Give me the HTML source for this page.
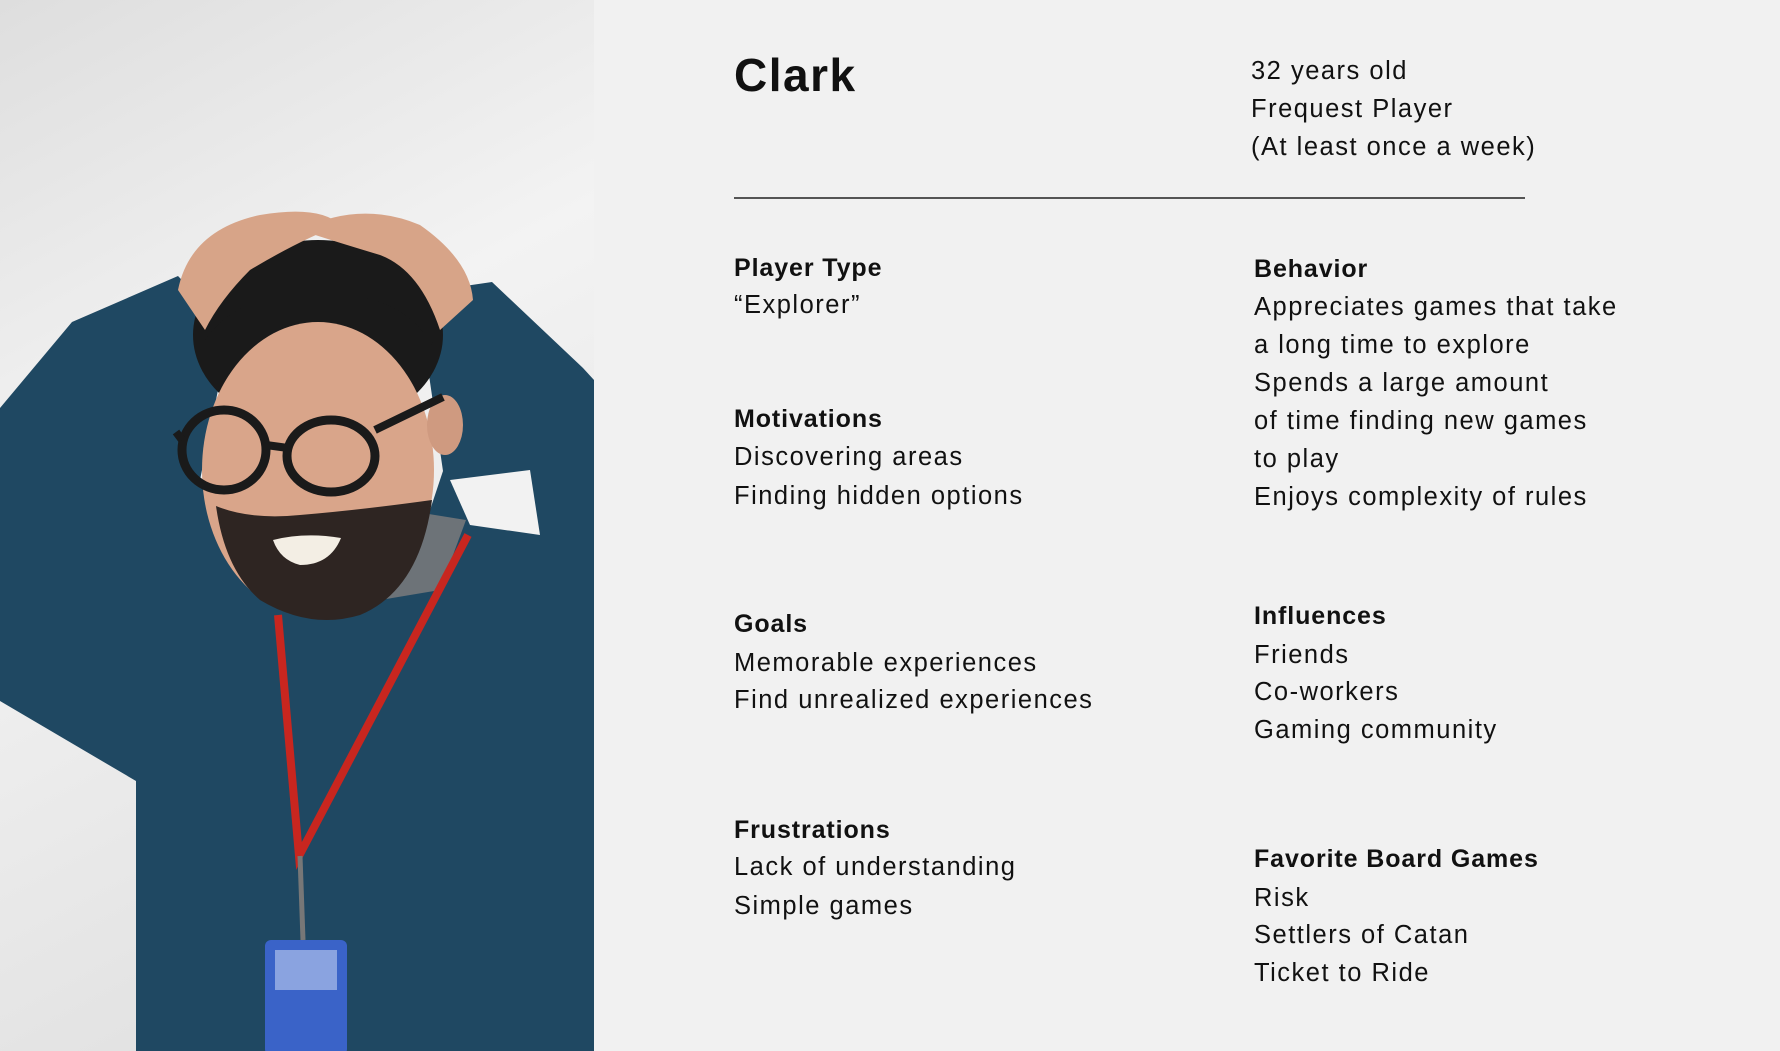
<!DOCTYPE html>
<html><head><meta charset="utf-8"><style>
html,body{margin:0;padding:0}
body{width:1780px;height:1051px;background:#f1f1f1;position:relative;overflow:hidden;font-family:"Liberation Sans",sans-serif;color:#111}
.t{position:absolute;font-size:25.5px;line-height:38px;white-space:nowrap;letter-spacing:1.5px}
.h{font-weight:bold;font-size:25px;letter-spacing:0.9px}
</style></head><body>
<svg style="position:absolute;left:0;top:0" width="594" height="1051" viewBox="0 0 594 1051">
<defs><linearGradient id="bg" x1="0" y1="0" x2="0.3" y2="1">
<stop offset="0" stop-color="#dedede"/><stop offset="0.45" stop-color="#f3f3f3"/><stop offset="1" stop-color="#e2e2e2"/></linearGradient></defs>
<rect width="594" height="1051" fill="url(#bg)"/>
<!-- sweater -->
<path d="M0,408 L72,322 L178,276 L230,330 L200,480 L250,560 L330,600 L420,540 L443,471 L417,293 L492,282 L583,368 L594,380 L594,1051 L136,1051 L136,781 L0,701 Z" fill="#1f4862"/>
<path d="M450,480 L530,470 L540,535 L470,525 Z" fill="#f2f2f2"/>
<!-- collar -->
<path d="M379,506 L466,520 L440,590 L380,600 Z" fill="#6d7378"/>
<!-- hair back -->
<ellipse cx="318" cy="335" rx="125" ry="95" fill="#1a1a1a"/>
<!-- head -->
<ellipse cx="318" cy="470" rx="116" ry="148" fill="#d9a58a"/>
<path d="M205,340 Q240,290 318,295 Q400,290 432,345 L440,300 Q400,245 318,245 Q230,250 200,320 Z" fill="#1a1a1a"/>
<!-- beard -->
<path d="M216,506 Q250,520 300,515 Q360,510 432,500 Q420,590 360,615 Q310,630 260,600 Q225,570 216,506 Z" fill="#2e2522"/>
<path d="M273,540 Q305,532 341,538 Q330,565 300,565 Q280,560 273,540 Z" fill="#f3eee4"/>
<!-- ears -->
<ellipse cx="445" cy="425" rx="18" ry="30" fill="#cf9a80"/>
<!-- hands -->
<path d="M178,290 Q190,230 260,215 Q320,205 340,225 Q300,240 250,270 Q220,300 205,330 Z" fill="#d7a488"/>
<path d="M300,230 Q360,200 420,225 Q470,260 473,300 L440,330 Q420,270 380,255 Q330,240 300,230 Z" fill="#d7a488"/>
<!-- glasses -->
<ellipse cx="224" cy="450" rx="42" ry="40" fill="none" stroke="#1a1a1a" stroke-width="9"/>
<ellipse cx="331" cy="456" rx="44" ry="36" fill="none" stroke="#1a1a1a" stroke-width="9"/>
<path d="M266,445 L288,448 M375,430 L443,397 M182,440 L176,432" stroke="#1a1a1a" stroke-width="8" fill="none"/>
<!-- lanyard -->
<path d="M278,615 L299,856 L468,535" stroke="#c8261f" stroke-width="8" fill="none"/>
<path d="M300,856 L303,940" stroke="#777" stroke-width="5"/>
<rect x="265" y="940" width="82" height="115" rx="6" fill="#3a63c8"/>
<rect x="275" y="950" width="62" height="40" fill="#8aa3e0"/>
</svg>

<div class="t" style="left:734px;top:47px;font-size:46px;line-height:56px;font-weight:900;letter-spacing:1.5px">Clark</div>
<div class="t" style="left:1251px;top:52px">32 years old</div>
<div class="t" style="left:1251px;top:90px">Frequest Player</div>
<div class="t" style="left:1251px;top:128px">(At least once a week)</div>
<div style="position:absolute;left:734px;top:197px;width:791px;height:2px;background:#555"></div>

<div class="t h" style="left:734px;top:249px">Player Type</div>
<div class="t" style="left:734px;top:286px">“Explorer”</div>
<div class="t h" style="left:734px;top:400px">Motivations</div>
<div class="t" style="left:734px;top:438px">Discovering areas</div>
<div class="t" style="left:734px;top:477px">Finding hidden options</div>
<div class="t h" style="left:734px;top:605px">Goals</div>
<div class="t" style="left:734px;top:644px">Memorable experiences</div>
<div class="t" style="left:734px;top:681px">Find unrealized experiences</div>
<div class="t h" style="left:734px;top:811px">Frustrations</div>
<div class="t" style="left:734px;top:848px">Lack of understanding</div>
<div class="t" style="left:734px;top:887px">Simple games</div>

<div class="t h" style="left:1254px;top:250px">Behavior</div>
<div class="t" style="left:1254px;top:288px">Appreciates games that take</div>
<div class="t" style="left:1254px;top:326px">a long time to explore</div>
<div class="t" style="left:1254px;top:364px">Spends a large amount</div>
<div class="t" style="left:1254px;top:402px">of time finding new games</div>
<div class="t" style="left:1254px;top:440px">to play</div>
<div class="t" style="left:1254px;top:478px">Enjoys complexity of rules</div>
<div class="t h" style="left:1254px;top:597px">Influences</div>
<div class="t" style="left:1254px;top:636px">Friends</div>
<div class="t" style="left:1254px;top:673px">Co-workers</div>
<div class="t" style="left:1254px;top:711px">Gaming community</div>
<div class="t h" style="left:1254px;top:840px">Favorite Board Games</div>
<div class="t" style="left:1254px;top:879px">Risk</div>
<div class="t" style="left:1254px;top:916px">Settlers of Catan</div>
<div class="t" style="left:1254px;top:954px">Ticket to Ride</div>
</body></html>
